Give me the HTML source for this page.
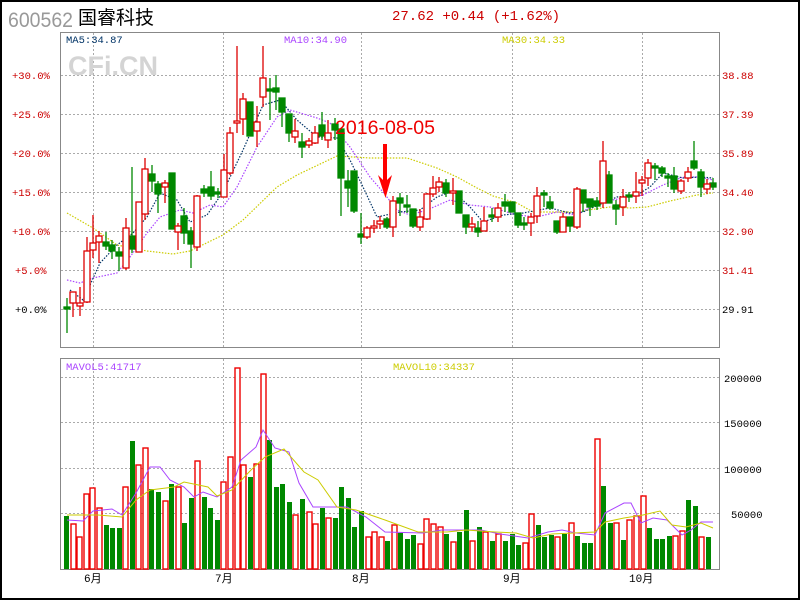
<!DOCTYPE html>
<html><head><meta charset="utf-8"><style>
html,body{margin:0;padding:0;background:#fff;}
svg{display:block;}
</style></head><body>
<svg width="800" height="600" viewBox="0 0 800 600" xmlns="http://www.w3.org/2000/svg" font-family="Liberation Mono,monospace">
<rect x="1" y="1" width="798" height="598" fill="#fff" stroke="#000" stroke-width="2"/>
<text x="8" y="27" font-family="Liberation Sans,sans-serif" font-size="21" fill="#999" textLength="65" lengthAdjust="spacingAndGlyphs">600562</text>
<text x="78" y="24" font-family="Liberation Sans,Noto Sans CJK SC,sans-serif" font-size="19" fill="#000">国睿科技</text>
<text x="392" y="20" font-size="14" fill="#c00">27.62 +0.44 (+1.62%)</text>

<g stroke="#aaa" stroke-width="1" stroke-dasharray="2,2" fill="none" shape-rendering="crispEdges">
<path d="M61 75.5H720M61 114.5H720M61 153.5H720M61 192.5H720M61 231.5H720M61 270.5H720M61 309.5H720"/>
<path d="M93.5 33V348M223.5 33V348M361.5 33V348M512.5 33V348M642.5 33V348"/>
<path d="M61 377.5H720M61 422.5H720M61 468.5H720M61 513.5H720"/>
<path d="M93.5 359V569M223.5 359V569M361.5 359V569M512.5 359V569M642.5 359V569"/>
</g>
<rect x="60.5" y="32.5" width="659" height="315" fill="none" stroke="#888" stroke-width="1" shape-rendering="crispEdges"/>
<rect x="60.5" y="358.5" width="659" height="211" fill="none" stroke="#888" stroke-width="1" shape-rendering="crispEdges"/>

<text x="68" y="75" font-family="Liberation Sans,sans-serif" font-weight="bold" font-size="27" fill="#d4d4d4">CFi.CN</text>
<text x="66" y="43" font-size="10.5" fill="#036">MA5:34.87</text>
<text x="284" y="43" font-size="10.5" fill="#a4f">MA10:34.90</text>
<text x="502" y="43" font-size="10.5" fill="#cc0">MA30:34.33</text>

<g font-size="10.5" fill="#c00">
<text x="12" y="79">+30.0%</text><text x="12" y="118">+25.0%</text><text x="12" y="157">+20.0%</text><text x="12" y="196">+15.0%</text><text x="12" y="235">+10.0%</text><text x="15" y="274">+5.0%</text>
<text x="722" y="79">38.88</text><text x="722" y="118">37.39</text><text x="722" y="157">35.89</text><text x="722" y="196">34.40</text><text x="722" y="235">32.90</text><text x="722" y="274">31.41</text>
</g>
<text x="15" y="313" font-size="10.5" fill="#000">+0.0%</text>
<text x="722" y="313" font-size="10.5" fill="#000">29.91</text>

<g fill="none" stroke-width="1.2" stroke-dasharray="1.5,1.5">
<polyline stroke="#cc0" points="67,213 93,228 117,245 147,251 173,254 190,251 223,235 243,220 277,187 297,175 337,156 370,158 407,158 437,168 457,177 477,188 493,196 517,203 533,212 573,212 610,207 630,208 647,207 670,201 697,195 713,193"/>
<polyline stroke="#a4f" points="67,280 80,283 93,278 117,273 130,257 147,233 160,217 180,210 193,213 210,205 223,207 237,187 257,147 277,117 290,110 317,118 330,123 350,147 370,177 383,192 397,210 410,215 427,210 450,200 470,205 490,207 517,215 537,217 557,212 577,215 597,203 623,198 643,195 663,185 683,177 700,177 713,180"/>
<polyline stroke="#036" points="70,290 83,300 90,285 100,263 117,245 133,233 147,217 160,193 177,200 190,222 207,215 223,192 243,150 263,105 280,100 297,120 317,137 337,138 350,160 363,187 377,217 400,212 420,210 437,197 453,191 470,207 483,222 503,215 523,213 550,208 570,213 583,212 603,203 617,197 637,195 650,187 663,173 683,178 700,177 713,178"/>
</g>

<g stroke-width="1.3">
<g stroke="#080" fill="#080">
<line x1="67" y1="298" x2="67" y2="333"/><rect x="64" y="307" width="6" height="2"/>
<line x1="106" y1="232" x2="106" y2="250"/><rect x="103" y="242" width="6" height="4"/>
<line x1="112" y1="240" x2="112" y2="259"/><rect x="109" y="245" width="6" height="6"/>
<line x1="119" y1="247" x2="119" y2="271"/><rect x="116" y="252" width="6" height="4"/>
<line x1="132" y1="167" x2="132" y2="253"/><rect x="129" y="236" width="6" height="13"/>
<line x1="152" y1="165" x2="152" y2="192"/><rect x="149" y="174" width="6" height="7"/>
<line x1="158" y1="181" x2="158" y2="213"/><rect x="155" y="184" width="6" height="10"/>
<line x1="172" y1="173" x2="172" y2="229"/><rect x="169" y="173" width="6" height="56"/>
<line x1="184" y1="208" x2="184" y2="244"/><rect x="181" y="216" width="6" height="17"/>
<line x1="191" y1="227" x2="191" y2="268"/><rect x="188" y="231" width="6" height="13"/>
<line x1="204" y1="185" x2="204" y2="197"/><rect x="201" y="189" width="6" height="4"/>
<line x1="211" y1="171" x2="211" y2="200"/><rect x="208" y="187" width="6" height="9"/>
<line x1="218" y1="188" x2="218" y2="198"/><rect x="215" y="192" width="6" height="2"/>
<line x1="250" y1="102" x2="250" y2="136"/><rect x="247" y="102" width="6" height="34"/>
<line x1="270" y1="78" x2="270" y2="120"/><rect x="267" y="89" width="6" height="2"/>
<line x1="276" y1="75" x2="276" y2="110"/><rect x="273" y="88" width="6" height="4"/>
<line x1="282" y1="98" x2="282" y2="127"/><rect x="279" y="98" width="6" height="14"/>
<line x1="289" y1="114" x2="289" y2="142"/><rect x="286" y="114" width="6" height="19"/>
<line x1="302" y1="133" x2="302" y2="158"/><rect x="299" y="142" width="6" height="5"/>
<line x1="322" y1="112" x2="322" y2="140"/><rect x="319" y="125" width="6" height="11"/>
<line x1="335" y1="118" x2="335" y2="140"/><rect x="332" y="124" width="6" height="6"/>
<line x1="341" y1="128" x2="341" y2="216"/><rect x="338" y="129" width="6" height="49"/>
<line x1="348" y1="170" x2="348" y2="207"/><rect x="345" y="181" width="6" height="7"/>
<line x1="354" y1="171" x2="354" y2="213"/><rect x="351" y="171" width="6" height="40"/>
<line x1="361" y1="213" x2="361" y2="244"/><rect x="358" y="234" width="6" height="3"/>
<line x1="387" y1="217" x2="387" y2="229"/><rect x="384" y="219" width="6" height="8"/>
<line x1="400" y1="193" x2="400" y2="216"/><rect x="397" y="198" width="6" height="5"/>
<line x1="407" y1="195" x2="407" y2="213"/><rect x="404" y="205" width="6" height="2"/>
<line x1="413" y1="209" x2="413" y2="228"/><rect x="410" y="209" width="6" height="17"/>
<line x1="446" y1="179" x2="446" y2="197"/><rect x="443" y="183" width="6" height="10"/>
<line x1="459" y1="191" x2="459" y2="213"/><rect x="456" y="191" width="6" height="22"/>
<line x1="466" y1="215" x2="466" y2="234"/><rect x="463" y="215" width="6" height="12"/>
<line x1="478" y1="221" x2="478" y2="237"/><rect x="475" y="228" width="6" height="4"/>
<line x1="492" y1="208" x2="492" y2="222"/><rect x="489" y="215" width="6" height="2"/>
<line x1="505" y1="194" x2="505" y2="212"/><rect x="502" y="202" width="6" height="4"/>
<line x1="512" y1="202" x2="512" y2="212"/><rect x="509" y="202" width="6" height="10"/>
<line x1="518" y1="213" x2="518" y2="228"/><rect x="515" y="213" width="6" height="12"/>
<line x1="524" y1="217" x2="524" y2="230"/><rect x="521" y="223" width="6" height="2"/>
<line x1="544" y1="190" x2="544" y2="207"/><rect x="541" y="193" width="6" height="2"/>
<line x1="550" y1="196" x2="550" y2="210"/><rect x="547" y="202" width="6" height="6"/>
<line x1="557" y1="221" x2="557" y2="234"/><rect x="554" y="221" width="6" height="11"/>
<line x1="570" y1="217" x2="570" y2="232"/><rect x="567" y="217" width="6" height="9"/>
<line x1="583" y1="190" x2="583" y2="212"/><rect x="580" y="190" width="6" height="13"/>
<line x1="590" y1="199" x2="590" y2="216"/><rect x="587" y="199" width="6" height="8"/>
<line x1="597" y1="197" x2="597" y2="210"/><rect x="594" y="201" width="6" height="5"/>
<line x1="609" y1="171" x2="609" y2="203"/><rect x="606" y="175" width="6" height="28"/>
<line x1="616" y1="200" x2="616" y2="225"/><rect x="613" y="205" width="6" height="4"/>
<line x1="629" y1="192" x2="629" y2="202"/><rect x="626" y="195" width="6" height="2"/>
<line x1="655" y1="163" x2="655" y2="180"/><rect x="652" y="166" width="6" height="2"/>
<line x1="662" y1="166" x2="662" y2="177"/><rect x="659" y="168" width="6" height="5"/>
<line x1="668" y1="173" x2="668" y2="187"/><rect x="665" y="176" width="6" height="2"/>
<line x1="674" y1="167" x2="674" y2="193"/><rect x="671" y="176" width="6" height="13"/>
<line x1="694" y1="141" x2="694" y2="170"/><rect x="691" y="161" width="6" height="7"/>
<line x1="701" y1="169" x2="701" y2="197"/><rect x="698" y="172" width="6" height="15"/>
<line x1="713" y1="178" x2="713" y2="190"/><rect x="710" y="183" width="6" height="4"/>
</g>
<g stroke="#d00" fill="#fff">
<line x1="73" y1="292" x2="73" y2="317"/><rect x="70" y="292" width="6" height="11"/>
<line x1="80" y1="287" x2="80" y2="316"/><rect x="77" y="303" width="6" height="3"/>
<line x1="87" y1="237" x2="87" y2="303"/><rect x="84" y="251" width="6" height="51"/>
<line x1="93" y1="215" x2="93" y2="258"/><rect x="90" y="243" width="6" height="7"/>
<line x1="99" y1="231" x2="99" y2="263"/><rect x="96" y="236" width="6" height="6"/>
<line x1="126" y1="218" x2="126" y2="270"/><rect x="123" y="228" width="6" height="40"/>
<line x1="139" y1="202" x2="139" y2="252"/><rect x="136" y="202" width="6" height="50"/>
<line x1="145" y1="158" x2="145" y2="220"/><rect x="142" y="169" width="6" height="45"/>
<line x1="165" y1="180" x2="165" y2="203"/><rect x="162" y="183" width="6" height="4"/>
<line x1="178" y1="223" x2="178" y2="250"/><rect x="175" y="226" width="6" height="6"/>
<line x1="197" y1="195" x2="197" y2="251"/><rect x="194" y="196" width="6" height="51"/>
<line x1="224" y1="154" x2="224" y2="197"/><rect x="221" y="170" width="6" height="27"/>
<line x1="230" y1="127" x2="230" y2="175"/><rect x="227" y="133" width="6" height="40"/>
<line x1="237" y1="46" x2="237" y2="133"/><rect x="234" y="121" width="6" height="2"/>
<line x1="243" y1="93" x2="243" y2="135"/><rect x="240" y="99" width="6" height="20"/>
<line x1="257" y1="106" x2="257" y2="147"/><rect x="254" y="122" width="6" height="9"/>
<line x1="263" y1="46" x2="263" y2="107"/><rect x="260" y="78" width="6" height="19"/>
<line x1="295" y1="119" x2="295" y2="143"/><rect x="292" y="131" width="6" height="6"/>
<line x1="309" y1="138" x2="309" y2="148"/><rect x="306" y="141" width="6" height="4"/>
<line x1="315" y1="126" x2="315" y2="144"/><rect x="312" y="133" width="6" height="10"/>
<line x1="328" y1="120" x2="328" y2="148"/><rect x="325" y="133" width="6" height="7"/>
<line x1="367" y1="226" x2="367" y2="239"/><rect x="364" y="228" width="6" height="9"/>
<line x1="374" y1="220" x2="374" y2="233"/><rect x="371" y="226" width="6" height="2"/>
<line x1="380" y1="216" x2="380" y2="229"/><rect x="377" y="221" width="6" height="3"/>
<line x1="393" y1="196" x2="393" y2="237"/><rect x="390" y="201" width="6" height="26"/>
<line x1="420" y1="209" x2="420" y2="231"/><rect x="417" y="217" width="6" height="10"/>
<line x1="427" y1="193" x2="427" y2="220"/><rect x="424" y="194" width="6" height="25"/>
<line x1="433" y1="176" x2="433" y2="197"/><rect x="430" y="188" width="6" height="6"/>
<line x1="439" y1="177" x2="439" y2="192"/><rect x="436" y="182" width="6" height="5"/>
<line x1="453" y1="178" x2="453" y2="205"/><rect x="450" y="191" width="6" height="2"/>
<line x1="472" y1="217" x2="472" y2="232"/><rect x="469" y="224" width="6" height="3"/>
<line x1="484" y1="207" x2="484" y2="231"/><rect x="481" y="221" width="6" height="10"/>
<line x1="498" y1="203" x2="498" y2="222"/><rect x="495" y="208" width="6" height="9"/>
<line x1="531" y1="213" x2="531" y2="236"/><rect x="528" y="217" width="6" height="6"/>
<line x1="537" y1="187" x2="537" y2="223"/><rect x="534" y="196" width="6" height="20"/>
<line x1="563" y1="213" x2="563" y2="232"/><rect x="560" y="217" width="6" height="15"/>
<line x1="577" y1="187" x2="577" y2="229"/><rect x="574" y="189" width="6" height="38"/>
<line x1="603" y1="141" x2="603" y2="208"/><rect x="600" y="161" width="6" height="42"/>
<line x1="623" y1="189" x2="623" y2="216"/><rect x="620" y="197" width="6" height="10"/>
<line x1="636" y1="172" x2="636" y2="203"/><rect x="633" y="192" width="6" height="4"/>
<line x1="642" y1="176" x2="642" y2="196"/><rect x="639" y="180" width="6" height="3"/>
<line x1="648" y1="159" x2="648" y2="186"/><rect x="645" y="163" width="6" height="15"/>
<line x1="681" y1="179" x2="681" y2="194"/><rect x="678" y="181" width="6" height="10"/>
<line x1="688" y1="167" x2="688" y2="182"/><rect x="685" y="172" width="6" height="6"/>
<line x1="707" y1="179" x2="707" y2="194"/><rect x="704" y="184" width="6" height="5"/>
</g>
</g>

<text x="335" y="134" font-family="Liberation Sans,sans-serif" font-size="19" fill="#e00" textLength="100" lengthAdjust="spacingAndGlyphs">2016-08-05</text>
<path d="M383 144H387V180L392 175L385.5 198L378 175L383 180Z" fill="#f00"/>

<text x="66" y="370" font-size="10.5" fill="#a4f">MAVOL5:41717</text>
<text x="393" y="370" font-size="10.5" fill="#cc0">MAVOL10:34337</text>
<g font-size="10.5" fill="#000">
<text x="724" y="382">200000</text><text x="724" y="427">150000</text><text x="724" y="473">100000</text><text x="731" y="518">50000</text>
</g>
<g font-size="11" fill="#000" font-family="Liberation Mono,Noto Sans CJK SC,monospace">
<text x="84" y="582">6月</text>
<text x="215" y="582">7月</text>
<text x="352" y="582">8月</text>
<text x="503" y="582">9月</text>
<text x="629" y="582">10月</text>
</g>
<g fill="#080">
<rect x="64" y="516" width="5" height="53"/><rect x="104" y="525" width="5" height="44"/><rect x="110" y="528" width="5" height="41"/><rect x="117" y="528" width="5" height="41"/><rect x="130" y="441" width="5" height="128"/><rect x="149" y="489" width="5" height="80"/><rect x="156" y="492" width="5" height="77"/><rect x="169" y="484" width="5" height="85"/><rect x="182" y="523" width="5" height="46"/><rect x="189" y="498" width="5" height="71"/><rect x="202" y="497" width="5" height="72"/><rect x="208" y="508" width="5" height="61"/><rect x="215" y="520" width="5" height="49"/><rect x="248" y="477" width="5" height="92"/><rect x="267" y="440" width="5" height="129"/><rect x="274" y="487" width="5" height="82"/><rect x="280" y="484" width="5" height="85"/><rect x="287" y="502" width="5" height="67"/><rect x="300" y="499" width="5" height="70"/><rect x="320" y="508" width="5" height="61"/><rect x="333" y="518" width="5" height="51"/><rect x="339" y="487" width="5" height="82"/><rect x="346" y="498" width="5" height="71"/><rect x="352" y="527" width="5" height="42"/><rect x="359" y="511" width="5" height="58"/><rect x="385" y="541" width="5" height="28"/><rect x="398" y="533" width="5" height="36"/><rect x="405" y="539" width="5" height="30"/><rect x="411" y="535" width="5" height="34"/><rect x="444" y="534" width="5" height="35"/><rect x="457" y="532" width="5" height="37"/><rect x="464" y="510" width="5" height="59"/><rect x="477" y="527" width="5" height="42"/><rect x="490" y="541" width="5" height="28"/><rect x="503" y="541" width="5" height="28"/><rect x="510" y="534" width="5" height="35"/><rect x="516" y="545" width="5" height="24"/><rect x="536" y="525" width="5" height="44"/><rect x="542" y="537" width="5" height="32"/><rect x="549" y="535" width="5" height="34"/><rect x="562" y="534" width="5" height="35"/><rect x="575" y="536" width="5" height="33"/><rect x="582" y="543" width="5" height="26"/><rect x="588" y="543" width="5" height="26"/><rect x="601" y="486" width="5" height="83"/><rect x="608" y="523" width="5" height="46"/><rect x="621" y="540" width="5" height="29"/><rect x="647" y="528" width="5" height="41"/><rect x="654" y="539" width="5" height="30"/><rect x="660" y="539" width="5" height="30"/><rect x="667" y="536" width="5" height="33"/><rect x="686" y="500" width="5" height="69"/><rect x="693" y="506" width="5" height="63"/><rect x="706" y="537" width="5" height="32"/>
</g>
<g fill="#fff" stroke="#e00" stroke-width="1.4">
<rect x="71" y="524" width="5" height="45"/><rect x="77" y="537" width="5" height="32"/><rect x="84" y="494" width="5" height="75"/><rect x="90" y="488" width="5" height="81"/><rect x="97" y="508" width="5" height="61"/><rect x="123" y="487" width="5" height="82"/><rect x="136" y="465" width="5" height="104"/><rect x="143" y="448" width="5" height="121"/><rect x="163" y="501" width="5" height="68"/><rect x="176" y="487" width="5" height="82"/><rect x="195" y="461" width="5" height="108"/><rect x="221" y="482" width="5" height="87"/><rect x="228" y="457" width="5" height="112"/><rect x="235" y="368" width="5" height="201"/><rect x="241" y="465" width="5" height="104"/><rect x="254" y="464" width="5" height="105"/><rect x="261" y="374" width="5" height="195"/><rect x="293" y="515" width="5" height="54"/><rect x="307" y="512" width="5" height="57"/><rect x="313" y="524" width="5" height="45"/><rect x="326" y="518" width="5" height="51"/><rect x="366" y="537" width="5" height="32"/><rect x="372" y="532" width="5" height="37"/><rect x="379" y="537" width="5" height="32"/><rect x="392" y="525" width="5" height="44"/><rect x="418" y="544" width="5" height="25"/><rect x="424" y="519" width="5" height="50"/><rect x="431" y="524" width="5" height="45"/><rect x="438" y="527" width="5" height="42"/><rect x="451" y="542" width="5" height="27"/><rect x="470" y="541" width="5" height="28"/><rect x="483" y="532" width="5" height="37"/><rect x="496" y="534" width="5" height="35"/><rect x="523" y="543" width="5" height="26"/><rect x="529" y="514" width="5" height="55"/><rect x="555" y="537" width="5" height="32"/><rect x="569" y="523" width="5" height="46"/><rect x="595" y="439" width="5" height="130"/><rect x="614" y="523" width="5" height="46"/><rect x="627" y="520" width="5" height="49"/><rect x="634" y="516" width="5" height="53"/><rect x="641" y="496" width="5" height="73"/><rect x="673" y="536" width="5" height="33"/><rect x="680" y="531" width="5" height="38"/><rect x="699" y="537" width="5" height="32"/>
</g>
<g fill="none" stroke-width="1">
<polyline stroke="#a4f" points="67,520 83,521 93,511 112,509 122,515 136,493 150,467 160,467 170,480 184,487 194,497 203,492 217,497 232,487 241,460 256,447 263,430 275,448 289,452 299,483 313,507 337,507 347,507 366,517 385,532 423,533 442,530 461,530 481,530 500,534 528,538 548,532 562,530 576,533 595,535 605,513 624,503 631,503 641,523 653,518 667,520 682,535 691,530 701,522 713,522"/>
<polyline stroke="#cc0" points="67,515 98,515 122,517 136,500 150,490 174,487 184,482 208,487 217,496 232,490 251,470 265,457 284,449 304,472 318,480 337,507 356,510 385,520 418,532 447,532 466,530 495,532 516,533 533,538 552,534 595,532 605,522 624,518 643,515 660,511 672,525 686,527 701,523 713,528"/>
</g>
</svg>
</body></html>
